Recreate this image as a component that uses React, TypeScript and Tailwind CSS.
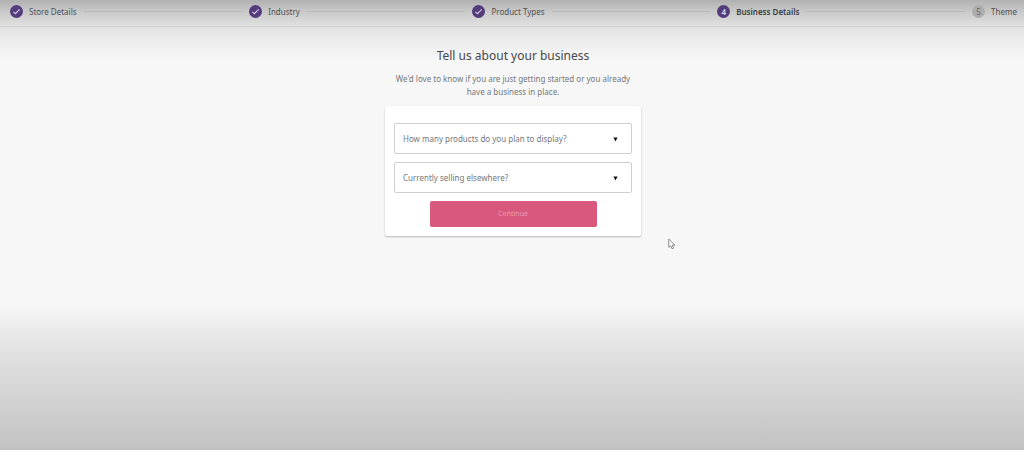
import React, { useState } from 'react';
import { clsx } from 'clsx';

type StepState = 'complete' | 'current' | 'upcoming';

interface Step {
  label: string;
  state: StepState;
}

const steps: Step[] = [
  { label: 'Store Details', state: 'complete' },
  { label: 'Industry', state: 'complete' },
  { label: 'Product Types', state: 'complete' },
  { label: 'Business Details', state: 'current' },
  { label: 'Theme', state: 'upcoming' },
];

const StepBadge: React.FC<{ number: number; state: StepState }> = ({ number, state }) => (
  <span
    className={clsx(
      'flex size-[13px] shrink-0 items-center justify-center rounded-full text-[8px] leading-none',
      state === 'upcoming' ? 'bg-[#acacac] text-[#666]' : 'bg-[#533b7c] text-[#e4dcef]',
      state === 'current' && 'font-semibold',
    )}
  >
    {state === 'complete' ? (
      <svg viewBox="0 0 13 13" className="size-[13px]" fill="none" aria-hidden="true">
        <path d="M3.4 6.8 5.4 8.7 9.7 4.3" stroke="#d8cde6" strokeWidth="1.1" />
      </svg>
    ) : (
      number
    )}
  </span>
);

const Stepper: React.FC = () => (
  <header className="border-b border-[#d3d3d5] pt-[5px] pr-[7px] pb-2 pl-2.5">
    <ol className="flex items-center">
      {steps.map((step, i) => (
        <React.Fragment key={step.label}>
          {i > 0 && <li aria-hidden="true" className="mx-[7px] h-px flex-1 bg-black/8" />}
          <li
            className="flex items-center gap-1.5"
            aria-current={step.state === 'current' ? 'step' : undefined}
          >
            <StepBadge number={i + 1} state={step.state} />
            <span
              className={clsx(
                'text-[8px] leading-[13px] whitespace-nowrap',
                step.state === 'current' ? 'font-semibold text-[#3c3c3f]' : 'text-[#505053]',
              )}
            >
              {step.label}
            </span>
          </li>
        </React.Fragment>
      ))}
    </ol>
  </header>
);

const SelectField: React.FC<{ id: string; label: string; options: string[] }> = ({
  id,
  label,
  options,
}) => {
  const [value, setValue] = useState('');

  return (
    <div className="relative">
      <select
        id={id}
        value={value}
        onChange={(e) => setValue(e.target.value)}
        className="block h-[31px] w-full appearance-none rounded-[2px] border border-[#cfcfd1] bg-white px-2 text-[8px] text-[#46484c]"
      >
        <option value="" />
        {options.map((option) => (
          <option key={option}>{option}</option>
        ))}
      </select>
      <label
        htmlFor={id}
        className={clsx(
          'pointer-events-none absolute inset-y-0 left-[9px] flex items-center text-[8px] leading-[13px] text-[#75777b]',
          value && 'invisible',
        )}
      >
        {label}
      </label>
      <svg
        viewBox="0 0 5 5"
        className="pointer-events-none absolute top-[14px] right-3.5 size-[5px]"
        aria-hidden="true"
      >
        <path d="M0.4 0.4H4.6L2.5 4.4Z" fill="#111" />
      </svg>
    </div>
  );
};

export default function App() {
  return (
    <div className="relative min-h-screen bg-[#f7f7f7] font-['Noto_Sans','Open_Sans',sans-serif]">
      {/* shading at the top and bottom edges of the window */}
      <div className="min-h-screen bg-[linear-gradient(to_bottom,#b0b0b0_0px,#c6c6c6_10px,#dfdfdf_25px,#ededed_40px,#f7f7f7_62px,#f7f7f7_68%,#e5e5e5_76%,#c2c2c2_100%)]">
        <Stepper />
        <main className="flex justify-center pt-5 pl-0.5">
          <div className="flex w-64 flex-col items-center">
            <h1 className="text-[12px] leading-[18px] text-[#46484c]">Tell us about your business</h1>
            <p className="mt-[7px] px-2 text-center text-[8px] leading-[13px] text-[#75777b]">
              We'd love to know if you are just getting started or you already have a business in
              place.
            </p>
            <form
              onSubmit={(e) => e.preventDefault()}
              className="mt-2 flex w-full flex-col gap-2 rounded-[2px] bg-white px-[9px] pt-[17px] pb-[9px] shadow-[0_1px_2px_rgba(0,0,0,0.25)]"
            >
              <SelectField
                id="product-count"
                label="How many products do you plan to display?"
                options={['0', '1 - 10', '11 - 100', '101 - 1000', '1000+']}
              />
              <SelectField
                id="selling-elsewhere"
                label="Currently selling elsewhere?"
                options={['No', 'Yes, on another platform', 'Yes, in person']}
              />
              <button
                type="submit"
                className="mx-auto h-[26px] w-[167px] rounded-[2px] bg-[#d9587d] text-[7px] text-[#ea9bb2]"
              >
                Continue
              </button>
            </form>
          </div>
        </main>
      </div>
      {/* mouse pointer */}
      <svg
        viewBox="0 0 8 12"
        className="pointer-events-none absolute top-[238px] left-[668px] h-3 w-2"
        aria-hidden="true"
      >
        <path
          d="M0.8 1V9.4L2.7 7.7L4.1 10.8L5.6 10.1L4.3 7.1H6.8Z"
          fill="#fff"
          stroke="#6d6d6d"
          strokeWidth="0.8"
        />
      </svg>
    </div>
  );
}
